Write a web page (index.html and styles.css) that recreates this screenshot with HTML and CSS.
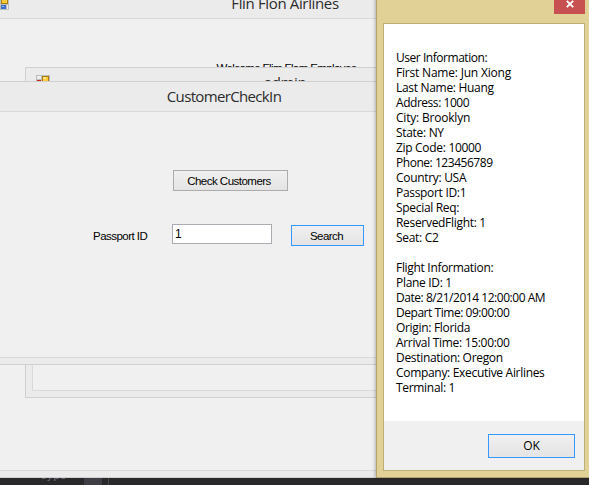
FILE: index.html
```html
<!DOCTYPE html>
<html lang="en">
<head>
<meta charset="utf-8">
<title>CustomerCheckIn</title>
<link rel="stylesheet" href="styles.css">
</head>
<body>
<div class="desktop">
  <div class="editor"><span class="editor-text">type</span><span class="editor-tab"></span><span class="editor-line"></span></div>

  <section class="window main">
    <header class="titlebar">
      <svg class="app-icon" width="15" height="14" viewBox="0 0 15 14"><use href="#form-icon"/></svg>
      <h1 class="title">Flin Flon Airlines</h1>
    </header>
    <div class="client"><p class="welcome">Welcome Flim Flom Employee</p></div>
  </section>

  <section class="window admin">
    <header class="titlebar">
      <svg class="app-icon" width="15" height="14" viewBox="0 0 15 14">
        <g id="form-icon">
          <path fill="#bdbdbd" d="M0 0H14V14H5V9H0z"/>
          <path fill="#eee" d="M1 1H5V4H1zM12 9H13V13H12z"/>
          <path fill="#c4281b" d="M1 5H5V8H1z"/>
          <path fill="#a77c08" d="M6 1H13V8H6z"/>
          <path fill="#ffcb37" d="M7 2H12V7H7z"/>
          <path fill="#ffe58c" d="M7 2H10V4H7z"/>
          <path fill="#3c6fcb" d="M6 9H11V13H6z"/>
          <path fill="#8bb2f2" d="M7 10H9V11H7z"/>
        </g>
      </svg>
      <h1 class="title">admin</h1>
    </header>
    <div class="client"></div>
  </section>

  <section class="window checkin">
    <header class="titlebar"><h1 class="title">CustomerCheckIn</h1></header>
    <form class="client">
      <button type="button" class="button check">Check Customers</button>
      <div class="row">
        <label class="label" for="passport">Passport ID</label>
        <input class="field" id="passport" value="1">
        <button type="button" class="button search">Search</button>
      </div>
    </form>
  </section>

  <section class="dialog">
    <div class="dialog-top">
      <div class="close"><svg width="8" height="8" viewBox="0 0 8 8"><path d="M.8 .8L7.2 7.2M7.2 .8L.8 7.2" stroke="#fff" stroke-width="1.9"/></svg></div>
    </div>
    <div class="dialog-body">
      <div class="message">
        <p class="tight">User Information:</p>
        <p class="wide">First Name: Jun Xiong</p>
        <p>Last Name: Huang</p>
        <p class="tight">Address: 1000</p>
        <p class="wide">City: Brooklyn</p>
        <p>State: NY</p>
        <p>Zip Code: 10000</p>
        <p class="tight">Phone: 123456789</p>
        <p>Country: USA</p>
        <p>Passport ID:1</p>
        <p>Special Req:</p>
        <p>ReservedFlight: 1</p>
        <p>Seat: C2</p>
        <p class="gap">Flight Information:</p>
        <p>Plane ID: 1</p>
        <p class="tight">Date: 8/21/2014 12:00:00 AM</p>
        <p class="tight">Depart Time: 09:00:00</p>
        <p>Origin: Florida</p>
        <p>Arrival Time: 15:00:00</p>
        <p>Destination: Oregon</p>
        <p>Company: Executive Airlines</p>
        <p>Terminal: 1</p>
      </div>
      <footer class="actions"><button type="button" class="button ok">OK</button></footer>
    </div>
  </section>
</div>
</body>
</html>
```

FILE: styles.css
```css
* { box-sizing: border-box; margin: 0; padding: 0; }

body {
  width: 589px;
  height: 485px;
  overflow: hidden;
  font-family: "Open Sans", "Noto Sans", sans-serif;
  font-size: 12px;
  color: #000;
}

.desktop {
  position: relative;
  width: 589px;
  height: 485px;
  overflow: hidden;
  background: #29292b;
}

.editor {
  position: absolute;
  left: 0;
  top: 478px;
  width: 589px;
  height: 7px;
  display: flex;
  overflow: hidden;
}
.editor-text {
  width: 84px;
  padding-left: 40px;
  font: 11px/14px "Liberation Mono", monospace;
  color: #70757b;
  margin-top: -9px;
}
.editor-tab { width: 18px; background: #3e3e44; }
.editor-line { width: 1px; margin-left: 6px; background: #48484c; }

.window {
  position: absolute;
  display: flex;
  flex-direction: column;
  overflow: hidden;
  background: #ebebeb;
  border: 1px solid #d0d0d0;
}
.titlebar { position: relative; flex: none; }
.title {
  text-align: center;
  font-size: 15px;
  font-weight: 400;
  line-height: 20px;
  white-space: nowrap;
  color: #2b2b2b;
}
.client {
  flex: 1;
  background: #f0f0f0;
  border: 1px solid #d9d9d9;
}
.app-icon { position: absolute; }

.main {
  left: -8px;
  top: -13px;
  width: 586px;
  height: 491px;
  padding: 0 6px 6px;
}
.main .titlebar { height: 30px; }
.main .title { padding-top: 5px; letter-spacing: -0.35px; }
.main .app-icon { left: -4px; top: 8px; }
.welcome {
  padding: 41px 0 0 3px;
  text-align: center;
  font: 11.5px/16px "Liberation Sans", sans-serif;
  letter-spacing: -0.6px;
}

.admin {
  left: 25px;
  top: 67px;
  width: 520px;
  height: 331px;
  padding: 0 6px 6px;
}
.admin .titlebar { height: 30px; }
.admin .title { padding-top: 4px; letter-spacing: -0.35px; }
.admin .app-icon { left: 4px; top: 7px; }

.checkin {
  left: -71px;
  top: 81px;
  width: 590px;
  height: 284px;
  padding: 0 6px 6px;
}
.checkin .titlebar { height: 29px; }
.checkin .title { padding-top: 4px; letter-spacing: -0.65px; }
.checkin .client { padding: 58px 0 0 156px; }

.button {
  display: block;
  background: linear-gradient(#f0f0f0, #e4e4e4);
  border: 1px solid #acacac;
  font-family: "Liberation Sans", sans-serif;
  font-size: 11.5px;
  color: #000;
  text-align: center;
  white-space: nowrap;
}
.check {
  width: 115px;
  height: 21px;
  margin-left: 80px;
  padding-right: 3px;
  line-height: 21px;
  letter-spacing: -0.52px;
}
.row { display: flex; margin-top: 33px; }
.label {
  width: 79px;
  padding-top: 4px;
  font: 11.5px/16px "Liberation Sans", sans-serif;
  letter-spacing: -0.53px;
}
.field {
  width: 100px;
  height: 20px;
  padding: 0 2px;
  background: #fff;
  border: 1px solid #abadb3;
  font: 12px/18px "Liberation Sans", sans-serif;
}
.search {
  width: 73px;
  height: 21px;
  margin: 1px 0 0 19px;
  padding-right: 2px;
  border-color: #3399ff;
  line-height: 21px;
  letter-spacing: -0.55px;
}

.dialog {
  position: absolute;
  left: 376px;
  top: -18px;
  width: 216px;
  height: 496px;
  background: #e2d196;
  border: 1px solid #b3a46f;
  padding: 0 6px 6px;
  box-shadow: -1px 0 3px rgba(0, 0, 0, 0.25);
}
.dialog-top {
  display: flex;
  justify-content: flex-end;
  height: 40px;
}
.close {
  display: flex;
  justify-content: center;
  align-items: flex-end;
  width: 31px;
  height: 31px;
  padding-bottom: 6px;
  background: #c75050;
}
.dialog-body {
  width: 202px;
  height: 448px;
  border: 1px solid #beae76;
  background: #f0f0f0;
}
.message {
  height: 397px;
  padding: 26px 0 0 12px;
  background: #fff;
  line-height: 15px;
  white-space: nowrap;
  letter-spacing: -0.31px;
}
.message .gap { margin-top: 15px; }
.message .tight { letter-spacing: -0.46px; }
.message .wide { letter-spacing: -0.2px; }
.actions { display: flex; justify-content: flex-end; padding: 13px 9px 0 0; }
.ok { width: 87px; height: 24px; border-color: #3399ff; font: 12px/22px "Open Sans", sans-serif; }
```
